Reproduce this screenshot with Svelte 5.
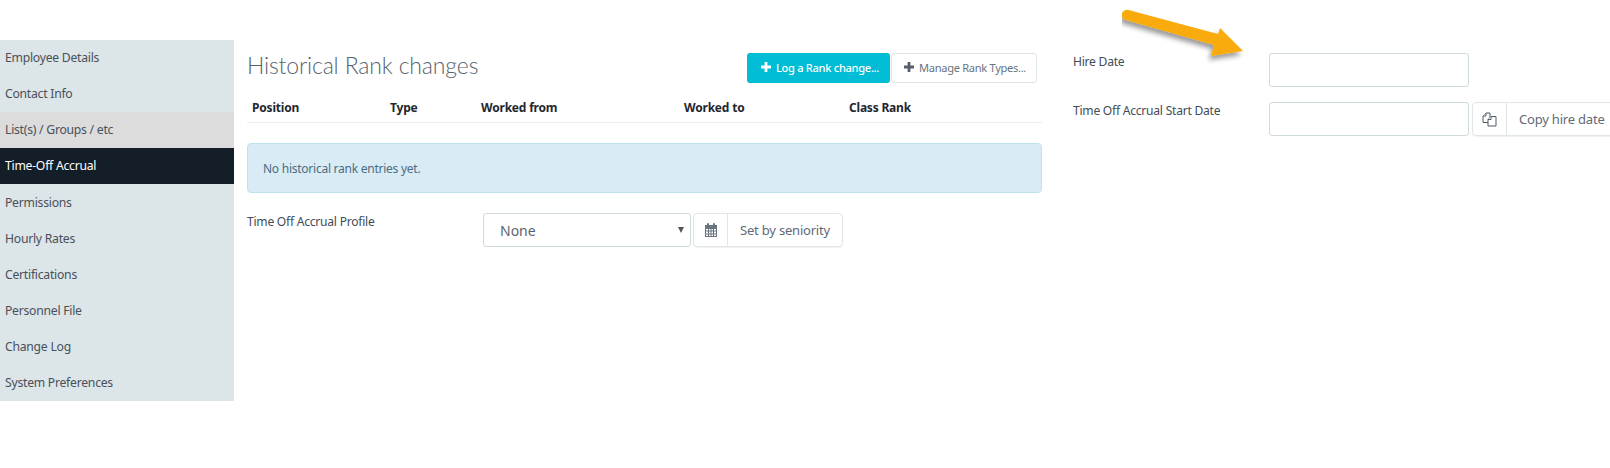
<script>
  const nav = ['Employee Details','Contact Info','List(s) / Groups / etc','Time-Off Accrual','Permissions','Hourly Rates','Certifications','Personnel File','Change Log','System Preferences'];
  const cols = ['Position','Type','Worked from','Worked to','Class Rank'];
</script>

<div class="page">
  <nav class="side">
    {#each nav as n, i}
      <a class="item" class:hover={i===2} class:active={i===3}>{n}</a>
    {/each}
  </nav>

  <main class="main">
    <div class="head">
      <h1>Historical Rank changes</h1>
      <div class="btns">
        <button class="btn primary">
          <svg class="plus" viewBox="0 0 10 10"><path d="M3.6 0h2.800v3.600H10v2.800H6.400V10H3.600V6.400H0V3.600h3.600z"/></svg><span>Log a Rank change...</span>
        </button>
        <button class="btn plain">
          <svg class="plus" viewBox="0 0 10 10"><path d="M3.6 0h2.800v3.600H10v2.800H6.400V10H3.600V6.400H0V3.600h3.600z"/></svg><span>Manage Rank Types...</span>
        </button>
      </div>
    </div>
    <div class="thead">
      {#each cols as c}<span>{c}</span>{/each}
    </div>
    <div class="alert">No historical rank entries yet.</div>
    <div class="profile">
      <label class="lbl pl">Time Off Accrual Profile</label>
      <div class="select">None<span class="caret"></span></div>
      <div class="group seniority">
        <span class="ic">
          <svg width="14" height="15" viewBox="0 0 14 15" fill="none" stroke="#69747e" stroke-width="1">
            <rect x="1.500" y="2.500" width="11" height="11" />
            <path d="M1.500 5.500h11M1.500 8h11M1.500 11h11M4.500 5.500v8M7 5.500v8M9.500 5.500v8"/>
            <path d="M1.500 4h11" stroke-width="2"/>
            <path d="M4 1v2.500M10 1v2.500" stroke-width="2" stroke-linecap="round"/>
          </svg>
        </span>
        <span class="tx">Set by seniority</span>
      </div>
    </div>
  </main>

  <aside class="right">
    <div class="row r1">
      <label class="lbl">Hire Date</label>
      <div class="input"></div>
    </div>
    <div class="row r2">
      <label class="lbl">Time Off Accrual Start Date</label>
      <div class="input"></div>
      <div class="group copy">
        <span class="ic">
          <svg width="15" height="15" viewBox="0 0 15 15" fill="#fff" stroke="#4f5a66" stroke-width="1">
            <path d="M1 10.500V4l3-3h4v9.500z"/>
            <path d="M1 4h3V1"/>
            <path d="M6 14V7.500L9 4.500h5V14z"/>
            <path d="M6 7.500h3v-3"/>
          </svg>
        </span>
        <span class="tx">Copy hire date</span>
      </div>
    </div>
  </aside>

  <svg class="arrow" width="130" height="70" viewBox="0 0 130 70">
    <defs>
      <filter id="sh" x="-20%" y="-30%" width="140%" height="170%">
        <feDropShadow dx="-2" dy="4" stdDeviation="2.500" flood-color="#000" flood-opacity="0.4"/>
      </filter>
    </defs>
    <path filter="url(#sh)" fill="#f9aa0a" d="M6.500 10 L96 34 L98 28 L121 51 L89 56 L92 45 L3.500 20 A5.200 5.200 0 0 1 6.500 10z"/>
  </svg>
</div>

<style>
  :global(body) { margin: 0; background: #fff; }
  .page {
    position: relative;
    width: 1610px; height: 468px; overflow: hidden;
    display: flex; align-items: flex-start;
    font-family: "Noto Sans", "Open Sans", sans-serif;
    font-size: 12px; color: #3f4a54;
  }
  .side { width: 234px; margin-top: 40px; background: #dce5e8; flex: none; }
  .item {
    display: flex; align-items: center; height: 36px; padding-left: 5px; padding-bottom: 2px; box-sizing: border-box;
    color: #4a5059; font-size: 12.200px; letter-spacing: -0.25px;
  }
  .item.hover { background: #dcdcdc; }
  .item.active { background: #141e28; color: #fff; margin-bottom: 1px; }

  .main { width: 795px; margin-left: 13px; margin-top: 53px; flex: none; }
  .head { display: flex; justify-content: space-between; height: 30px; padding-right: 5px; }
  h1 {
    margin: 0; font-family: "Lato", "Noto Sans", sans-serif; font-weight: 300;
    font-size: 23px; line-height: 24px; color: #58636d; letter-spacing: -0.15px;
  }
  .btns { display: flex; gap: 1px; }
  .btn {
    display: flex; align-items: center; justify-content: center; height: 30px; padding: 0 0 2px;
    font: inherit; font-size: 11.100px; letter-spacing: -0.3px; border-radius: 3px; box-sizing: border-box;
  }
  .plus { width: 10px; height: 10px; margin-right: 5px; fill: currentColor; }
  .primary { width: 143px; background: #00bcd4; border: 0; color: #fff; font-weight: 500; padding-left: 3px; }
  .plain { width: 146px; background: #fff; border: 1px solid #dde4e6; color: #6a7480; padding-left: 2px; }
  .plain .plus { fill: #55606a; margin-right: 5px; }

  .thead {
    display: grid; grid-template-columns: 138px 91px 203px 165px 1fr;
    height: 40px; padding: 17px 0 0 5px; box-sizing: border-box;
    border-bottom: 1px solid #e8eeef;
    font-weight: 700; font-size: 12px; color: #1f2730; letter-spacing: -0.2px;
    line-height: 16px; align-items: start;
  }

  .alert {
    box-sizing: border-box; height: 50px; margin-top: 20px;
    display: flex; align-items: center; padding-left: 15px;
    background: #d9ecf5; border: 1px solid #bfe3ee; border-radius: 4px;
    color: #4a6d85; font-size: 12px; letter-spacing: -0.25px;
  }
  .profile { display: flex; align-items: flex-start; margin-top: 20px; }
  .lbl { color: #424c56; font-size: 12.100px; letter-spacing: -0.25px; line-height: 17px; }
  .pl { width: 236px; flex: none; }
  .select {
    position: relative; box-sizing: border-box; width: 208px; height: 34px;
    border: 1px solid #cfdbdd; border-radius: 3px;
    padding-left: 16px; line-height: 34px; font-size: 14px; color: #5a646e;
  }
  .caret {
    position: absolute; right: 6px; top: 13px; width: 0; height: 0;
    border-left: 3px solid transparent; border-right: 3px solid transparent;
    border-top: 6px solid #555;
  }
  .group {
    box-sizing: border-box; display: flex; height: 34px; margin-left: 2px;
    border: 1px solid #e0e6e8; border-radius: 4px;
    box-shadow: 0 1px 1px rgba(0,0,0,.06);
    color: #5f6a75; font-size: 13px; line-height: 32px; letter-spacing: -0.2px;
  }
  .ic {
    width: 34px; flex: none; box-sizing: border-box; border-right: 1px solid #e0e6e8;
    display: flex; align-items: center; justify-content: center;
  }
  .tx { padding-left: 12px; white-space: nowrap; }
  .seniority { width: 150px; }
  .copy { width: 170px; flex: none; margin-left: 3px; }

  .right { margin-left: 31px; margin-top: 53px; flex: none; width: 540px; }
  .row { display: flex; align-items: flex-start; }
  .row .lbl { width: 196px; flex: none; }
  .r2 { margin-top: 15px; }
  .input {
    box-sizing: border-box; width: 200px; height: 34px; flex: none;
    border: 1px solid #cfdbdd; border-radius: 3px; background: #fff;
  }
  .arrow { position: absolute; left: 1122px; top: 0; }
</style>
